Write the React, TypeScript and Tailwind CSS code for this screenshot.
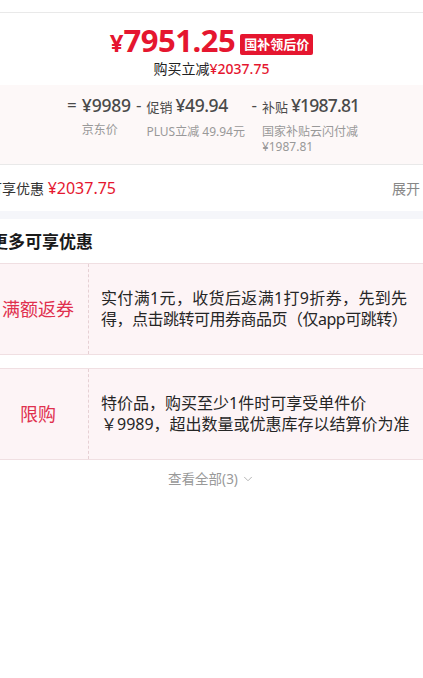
import { ChevronDown } from "lucide-react";

const font = { fontFamily: '"Noto Sans", "Noto Sans CJK SC", sans-serif' };

const coupons = [
  {
    tag: "满额返券",
    lines: [
      { text: "实付满1元，收货后返满1打9折券，先到先", cls: "tracking-[0.35px]" },
      { text: "得，点击跳转可用券商品页（仅app可跳转）", cls: "tracking-[-0.5px]" },
    ],
  },
  {
    tag: "限购",
    lines: [
      { text: "特价品，购买至少1件时可享受单件价", cls: "tracking-normal" },
      { text: "￥9989，超出数量或优惠库存以结算价为准", cls: "tracking-normal" },
    ],
  },
];

export default function App() {
  return (
    <div className="w-[423px] h-[678px] overflow-hidden bg-white text-[#333]" style={font}>
      <div className="h-3" />
      <div className="border-t border-[#e9e9e9]">
        {/* 到手价 */}
        <div className="flex items-end justify-center pt-[12px] gap-[5px]">
          <div className="flex items-baseline text-[#e5162f] font-bold leading-[30px]">
            <span className="text-[24px]">¥</span>
            <span className="text-[31px] tracking-[-0.5px]">7951.25</span>
          </div>
          <span className="mb-[3px] rounded-[2px] bg-[#e5162f] px-[4px] text-[13px] font-bold leading-[21px] text-white">
            国补领后价
          </span>
        </div>
        <p className="mt-[2px] text-center text-[14px] leading-[18px] text-[#222]">
          购买立减<span className="font-medium text-[#e5162f]">¥2037.75</span>
        </p>

        {/* 价格明细 */}
        <div className="mt-[7px] h-[79px] bg-[#fdf8f8] pt-[9px]">
          <div className="flex justify-center gap-[5px] pl-[2px] text-[#4a4a4a]">
            <span className="text-[17px] leading-[22px]">=</span>
            <div>
              <p className="text-[17.5px] font-medium leading-[22px] tracking-[-0.2px]">¥9989</p>
              <p className="mt-[6px] text-[12px] leading-[15px] text-[#999]">京东价</p>
            </div>
            <span className="text-[17px] leading-[22px]">-</span>
            <div className="w-[100px]">
              <p className="flex items-baseline gap-[3px] leading-[22px]">
                <span className="text-[13px]">促销</span>
                <span className="text-[17.5px] font-medium tracking-[-0.4px]">¥49.94</span>
              </p>
              <p className="mt-[6px] text-[12px] leading-[15px] text-[#999]">PLUS立减 49.94元</p>
            </div>
            <span className="text-[17px] leading-[22px]">-</span>
            <div className="w-[96px]">
              <p className="flex items-baseline gap-[3px] whitespace-nowrap leading-[22px]">
                <span className="text-[13px]">补贴</span>
                <span className="text-[17.5px] font-medium tracking-[-0.8px]">¥1987.81</span>
              </p>
              <p className="mt-[6px] text-[12px] leading-[15px] text-[#999]">国家补贴云闪付减¥1987.81</p>
            </div>
          </div>
        </div>
      </div>

      <div className="-ml-3 border-t border-[#e9e9e9]">
        {/* 可享优惠 */}
        <div className="flex h-[46px] items-center justify-between pr-[3px]">
          <p className="text-[14px]">
            可享优惠 <span className="text-[16px] text-[#e5162f]">¥2037.75</span>
          </p>
          <span className="text-[14px] text-[#888]">展开</span>
        </div>
        <div className="h-2 bg-[#f5f6fa]" />

        {/* 更多可享优惠 */}
        <h3 className="flex h-[44px] items-center pl-[3px] pt-[2px] text-[17px] font-bold text-[#1a1a1a]">
          更多可享优惠
        </h3>

        <div className="flex flex-col gap-[13px]">
          {coupons.map((c) => (
            <div key={c.tag} className="flex h-[92px] border-y border-[#f0dfe2] bg-[#fdf4f6]">
              <div className="flex w-[101px] shrink-0 items-center justify-center border-r border-dashed border-[#e6d0d4] text-[18px] text-[#e0304e]">
                {c.tag}
              </div>
              <div className="flex flex-col justify-center pl-[12px] text-[16px] leading-[21px] text-[#262626]">
                {c.lines.map((l) => (
                  <p key={l.text} className={`whitespace-nowrap ${l.cls}`}>
                    {l.text}
                  </p>
                ))}
              </div>
            </div>
          ))}
        </div>
      </div>

      <div className="mt-[9px] flex items-center justify-center gap-[3px] text-[13.5px] text-[#999]">
        查看全部(3)
        <ChevronDown className="h-[14px] w-[14px] text-[#aaa]" strokeWidth={1.5} />
      </div>
    </div>
  );
}
